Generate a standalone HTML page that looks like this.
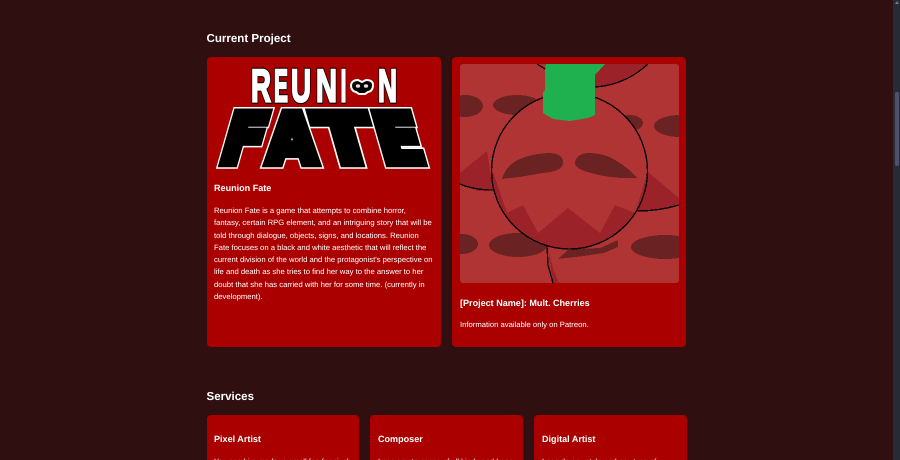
<!DOCTYPE html>
<html lang="en"><head><meta charset="utf-8"><title>Projects</title>
<style>
*{box-sizing:border-box}
html,body{margin:0;padding:0;width:900px;height:460px;overflow:hidden;background:#2f0f0f}
#w{position:relative;width:900px;height:460px;overflow:hidden;background:#2f0f0f;color:#fff;font-family:"Liberation Sans",Arial,sans-serif;text-rendering:geometricPrecision}
.abs{position:absolute}
h2{position:absolute;margin:0;font-size:11.55px;line-height:16px;font-weight:700;left:206.5px}
.card{position:absolute;background:#aa0000;border-radius:4px;overflow:hidden}
h3{position:absolute;margin:0;font-size:9.05px;line-height:13px;font-weight:700;left:7.5px;white-space:nowrap}
p{position:absolute;margin:0;font-size:7.68px;line-height:12.3px;left:7.5px;white-space:nowrap}
.sb{position:absolute;left:893px;top:0;width:7px;height:460px;background:#272b35}
.th{position:absolute;left:1.5px;top:92px;width:4px;height:74px;border-radius:2px;background:#50506e}
.ar{position:absolute;left:1.5px;top:1px;width:0;height:0;border-left:2px solid transparent;border-right:2px solid transparent;border-bottom:3px solid #777}
</style></head><body><div id="w">
<h2 style="top:30.5px">Current Project</h2>
<div class="card" style="left:206.5px;top:57px;width:234px;height:290px">
<h3 style="top:125px">Reunion Fate</h3>
<p style="top:148px">Reunion Fate is a game that attempts to combine horror,<br>fantasy, certain RPG element, and an intriguing story that will be<br>told through dialogue, objects, signs, and locations. Reunion<br>Fate focuses on a black and white aesthetic that will reflect the<br>current division of the world and the protagonist's perspective on<br>life and death as she tries to find her way to the answer to her<br>doubt that she has carried with her for some time. (currently in<br>development).</p>
</div>
<div class="card" style="left:452px;top:57px;width:234px;height:290px">
<h3 style="top:239.5px;left:8px">[Project Name]: Mult. Cherries</h3>
<p style="top:262px;left:8px">Information available only on Patreon.</p>
</div>
<svg class="abs" style="left:0;top:0" width="900" height="460" viewBox="0 0 900 460">
<defs>
<clipPath id="im"><rect x="460" y="64" width="219" height="219" rx="3"/></clipPath>
<clipPath id="ci"><circle cx="569.5" cy="171" r="78"/></clipPath>
</defs>
<g font-family="'Liberation Sans',sans-serif" font-weight="700" font-size="46" stroke-linejoin="miter">
<g fill="#000" stroke="#000" stroke-width="4.4">
<text x="251" y="101.5" textLength="20" lengthAdjust="spacingAndGlyphs">R</text>
<text x="274" y="101.5" textLength="14" lengthAdjust="spacingAndGlyphs">E</text>
<text x="291" y="101.5" textLength="20" lengthAdjust="spacingAndGlyphs">U</text>
<text x="316" y="101.5" textLength="21" lengthAdjust="spacingAndGlyphs">N</text>
<text x="340.5" y="101.5" textLength="6" lengthAdjust="spacingAndGlyphs">I</text>
<text x="378" y="101.5" textLength="19" lengthAdjust="spacingAndGlyphs">N</text>
</g>
<g fill="#fff" stroke="#fff" stroke-width="2.2">
<text x="251" y="101.5" textLength="20" lengthAdjust="spacingAndGlyphs">R</text>
<text x="274" y="101.5" textLength="14" lengthAdjust="spacingAndGlyphs">E</text>
<text x="291" y="101.5" textLength="20" lengthAdjust="spacingAndGlyphs">U</text>
<text x="316" y="101.5" textLength="21" lengthAdjust="spacingAndGlyphs">N</text>
<text x="340.5" y="101.5" textLength="6" lengthAdjust="spacingAndGlyphs">I</text>
<text x="378" y="101.5" textLength="19" lengthAdjust="spacingAndGlyphs">N</text>
</g>
</g>
<path d="M351 85q1-5 7-5l4 2 4-2q7 0 7 5 0 6-5 7l-3 2h-6l-3-2q-5-1-5-7z" fill="#000" stroke="#fff" stroke-width="2"/>
<ellipse cx="358" cy="86" rx="2.2" ry="1.8" fill="#ddd"/><ellipse cx="366" cy="86" rx="2.2" ry="1.8" fill="#ddd"/>
<g font-family="'DejaVu Sans',sans-serif" font-weight="700" font-size="69" stroke-linejoin="miter">
<g fill="#fff" stroke="#fff" stroke-width="11.5">
<text transform="translate(217,163) skewX(-16)" textLength="42" lengthAdjust="spacingAndGlyphs">F</text>
<text transform="translate(267,163)" textLength="50" lengthAdjust="spacingAndGlyphs">A</text>
<text transform="translate(325,163) skewX(16)" textLength="54" lengthAdjust="spacingAndGlyphs">T</text>
<text transform="translate(383,163) skewX(16)" textLength="45" lengthAdjust="spacingAndGlyphs">E</text>
</g>
<g fill="#000" stroke="#000" stroke-width="8.5">
<text transform="translate(217,163) skewX(-16)" textLength="42" lengthAdjust="spacingAndGlyphs">F</text>
<text transform="translate(267,163)" textLength="50" lengthAdjust="spacingAndGlyphs">A</text>
<text transform="translate(325,163) skewX(16)" textLength="54" lengthAdjust="spacingAndGlyphs">T</text>
<text transform="translate(383,163) skewX(16)" textLength="45" lengthAdjust="spacingAndGlyphs">E</text>
</g>
</g>
<g clip-path="url(#im)" shape-rendering="crispEdges">
<rect x="460" y="64" width="219" height="219" fill="#b03434"/>
<g fill="#6b2222">
<ellipse cx="465" cy="106" rx="18" ry="11"/>
<ellipse cx="517" cy="105" rx="24" ry="10"/>
<ellipse cx="630" cy="123" rx="13" ry="8"/>
<ellipse cx="680" cy="126" rx="26" ry="11"/>
<ellipse cx="462" cy="244" rx="16" ry="10"/>
<ellipse cx="518" cy="245" rx="29" ry="12"/>
<ellipse cx="665" cy="247" rx="34" ry="12"/>
<path d="M558 259l10-9 10-1 22-1 18-8v7l-14 6-20 3-18 2z"/>
</g>
<g fill="#9a2228">
<path d="M460 173l27-22 6 39-15 1-18-7z"/>
<path d="M648 172l31 26v6l-19 6-23 1z"/>
<path d="M605 64l-10 11v12l25-5 28-18z"/>
<path d="M548 250l5 33h6l-5-12z"/>
</g>
<circle cx="569.5" cy="171" r="78" fill="#b03434"/>
<g fill="#9a2228" clip-path="url(#ci)">
<path d="M491 165l16 48 16-8 15 28 30-25 32 25 15-28 20 8 15-48v95H491z"/>
</g>
<g fill="#6b2222">
<path d="M502 179q4-14 18-20 14-6 30-6 13 1 13 9 0 8-13 10-14 2-30 5z"/>
<path d="M575 163q1-9 13-10 16 0 27 7 14 8 22 18-26 1-46-5-16-4-16-10z"/>
</g>
<g fill="none" stroke="#000" stroke-width="1.3">
<circle cx="569.5" cy="171" r="78"/>
<path d="M460 184q14 6 33 6"/>
<path d="M637 211q22 0 42-6"/>
<path d="M595 87q30-2 53-23"/>
<path d="M537 64l10 6"/>
<path d="M547 246l1 19 5 18"/>
</g>
<path d="M546 64h59l-10 11v40l-7 3-18 3-17-2-10-6V92l2-2V70z" fill="#1fb04f"/>
</g>
</svg>
<h2 style="top:389px">Services</h2>
<div class="card" style="left:206.5px;top:415px;width:152px;height:60px"><h3 style="top:18px">Pixel Artist</h3><p style="top:41px">You can hire me for a small fee for pixel</p></div>
<div class="card" style="left:370px;top:415px;width:152.5px;height:60px"><h3 style="top:18px;left:8px">Composer</h3><p style="top:41px;left:8px">I can create songs of all kinds and I can</p></div>
<div class="card" style="left:534px;top:415px;width:152.5px;height:60px"><h3 style="top:18px;left:8px">Digital Artist</h3><p style="top:41px;left:8px">I can do any style and any type of</p></div>
<div class="sb"><div class="ar"></div><div class="th"></div></div>
</div></body></html>
